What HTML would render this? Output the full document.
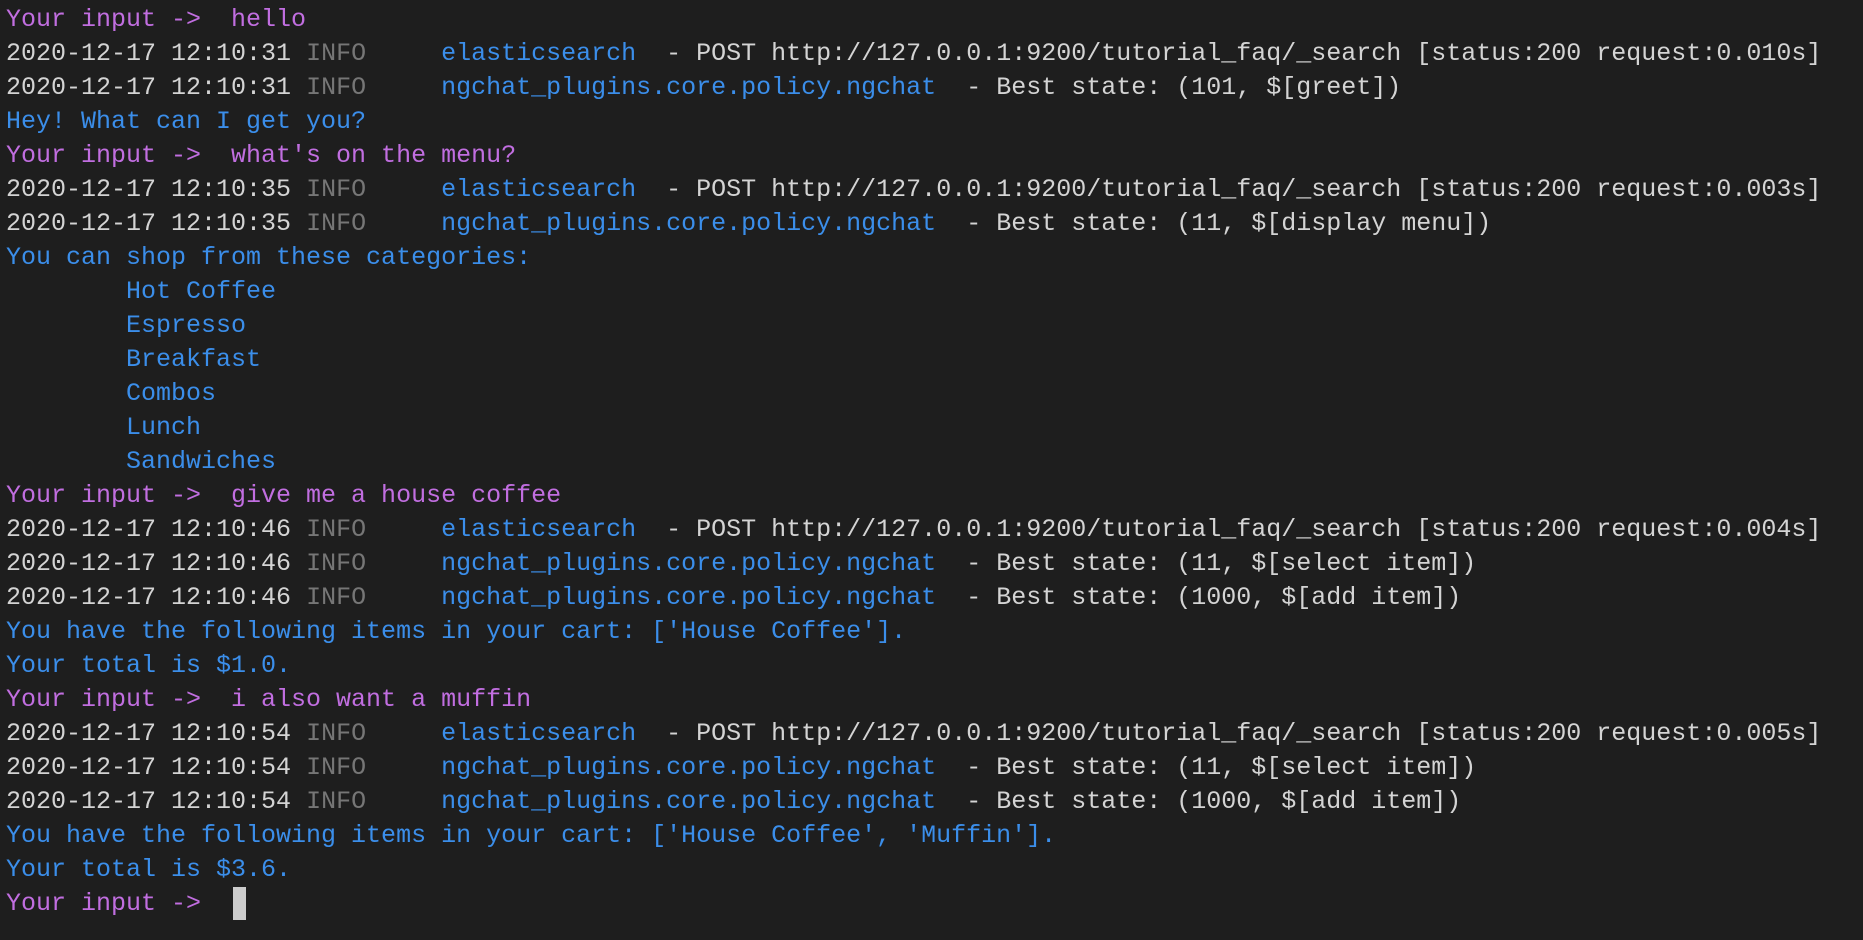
<!DOCTYPE html>
<html><head><meta charset="utf-8"><style>
html,body{margin:0;padding:0;background:#1e1e1e;width:1863px;height:940px;overflow:hidden}
pre{margin:0;position:absolute;left:6px;top:3px;font-family:"Liberation Mono",monospace;font-size:25px;line-height:34px;color:#d4d4d4;white-space:pre}
.p{color:#c16ee0}.b{color:#3b8eea}.g{color:#767676}
.cur{position:absolute;left:233px;top:887px;width:13px;height:33px;background:#cccccc}
</style></head><body>
<pre><span class="p">Your input ->  hello</span>
2020-12-17 12:10:31 <span class="g">INFO</span>     <span class="b">elasticsearch</span>  - POST http://127.0.0.1:9200/tutorial_faq/_search [status:200 request:0.010s]
2020-12-17 12:10:31 <span class="g">INFO</span>     <span class="b">ngchat_plugins.core.policy.ngchat</span>  - Best state: (101, $[greet])
<span class="b">Hey! What can I get you?</span>
<span class="p">Your input ->  what's on the menu?</span>
2020-12-17 12:10:35 <span class="g">INFO</span>     <span class="b">elasticsearch</span>  - POST http://127.0.0.1:9200/tutorial_faq/_search [status:200 request:0.003s]
2020-12-17 12:10:35 <span class="g">INFO</span>     <span class="b">ngchat_plugins.core.policy.ngchat</span>  - Best state: (11, $[display menu])
<span class="b">You can shop from these categories:
        Hot Coffee
        Espresso
        Breakfast
        Combos
        Lunch
        Sandwiches</span>
<span class="p">Your input ->  give me a house coffee</span>
2020-12-17 12:10:46 <span class="g">INFO</span>     <span class="b">elasticsearch</span>  - POST http://127.0.0.1:9200/tutorial_faq/_search [status:200 request:0.004s]
2020-12-17 12:10:46 <span class="g">INFO</span>     <span class="b">ngchat_plugins.core.policy.ngchat</span>  - Best state: (11, $[select item])
2020-12-17 12:10:46 <span class="g">INFO</span>     <span class="b">ngchat_plugins.core.policy.ngchat</span>  - Best state: (1000, $[add item])
<span class="b">You have the following items in your cart: ['House Coffee'].
Your total is $1.0.</span>
<span class="p">Your input ->  i also want a muffin</span>
2020-12-17 12:10:54 <span class="g">INFO</span>     <span class="b">elasticsearch</span>  - POST http://127.0.0.1:9200/tutorial_faq/_search [status:200 request:0.005s]
2020-12-17 12:10:54 <span class="g">INFO</span>     <span class="b">ngchat_plugins.core.policy.ngchat</span>  - Best state: (11, $[select item])
2020-12-17 12:10:54 <span class="g">INFO</span>     <span class="b">ngchat_plugins.core.policy.ngchat</span>  - Best state: (1000, $[add item])
<span class="b">You have the following items in your cart: ['House Coffee', 'Muffin'].
Your total is $3.6.</span>
<span class="p">Your input -> </span></pre>
<div class="cur"></div>
</body></html>
